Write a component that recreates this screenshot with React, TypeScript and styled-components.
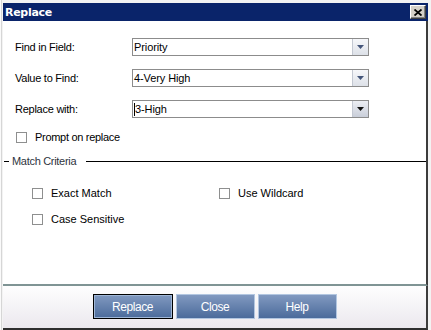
import React from "react";
import styled, { createGlobalStyle } from "styled-components";

const Global = createGlobalStyle`
  html, body { margin: 0; padding: 0; background: #ffffff; }
  body { font-family: "Liberation Sans", Arial, sans-serif; }
  * { box-sizing: border-box; }
`;

const Frame = styled.div`
  width: 431px;
  height: 330px;
  padding: 3px 3px 0 3px;
  background: #f3f3f3;
  box-shadow: inset 1px 0 0 #fafafa, inset 2px 0 0 #d6d6d6;
  display: flex;
  flex-direction: column;
`;

const TitleBar = styled.div`
  height: 18px;
  flex: none;
  background: #0a246a;
  display: flex;
  align-items: center;
  justify-content: space-between;
  padding: 0 2px 0 2px;
`;

const Title = styled.span`
  color: #ffffff;
  font-family: "DejaVu Sans", Verdana, sans-serif;
  font-weight: bold;
  font-size: 11px;
  letter-spacing: -0.3px;
`;

const CloseButton = styled.div`
  width: 16px;
  height: 14px;
  background: #d4d0c8;
  border: 1px solid;
  border-color: #ffffff #404040 #404040 #ffffff;
  box-shadow: inset -1px -1px 0 #808080;
  display: flex;
  align-items: center;
  justify-content: center;
`;

const Body = styled.div`
  flex: 1;
  background: #ffffff;
  border-right: 2px solid #3c3c3c;
  border-bottom: 2px solid #7f9494;
  display: flex;
  flex-direction: column;
`;

const Form = styled.div`
  display: grid;
  grid-template-columns: 117px 237px;
  row-gap: 13px;
  padding: 17px 0 0 12px;
  align-items: center;
`;

const Label = styled.span`
  font-size: 11px;
  letter-spacing: -0.25px;
  color: #000;
`;

const SelectBox = styled.div`
  height: 18px;
  border: 1px solid #8c8c8c;
  background: #fff;
  display: flex;
  align-items: stretch;
`;

const SelectText = styled.div`
  flex: 1;
  display: flex;
  align-items: center;
  padding-left: 1px;
  font-size: 11px;
  letter-spacing: -0.1px;
  color: #000;
`;

const Caret = styled.span`
  display: inline-block;
  width: 1px;
  height: 13px;
  background: #000;
`;

const DropButton = styled.div<{ $active?: boolean }>`
  width: 16px;
  flex: none;
  border-left: 1px solid #c3c8d2;
  background: ${(p) =>
    p.$active
      ? "linear-gradient(#eceef3, #c9ced9)"
      : "linear-gradient(#f6f7fa, #dde1e8)"};
  display: flex;
  align-items: center;
  justify-content: center;
`;

const CheckRow = styled.div`
  display: flex;
  align-items: center;
  height: 11px;
  gap: 8px;
`;

const PromptRow = styled(CheckRow)`
  margin: 14px 0 0 13px;
`;

const CheckBox = styled.span`
  width: 11px;
  height: 11px;
  flex: none;
  border: 1px solid #8e8f8f;
  background: #fff;
`;

const CheckLabel = styled.span<{ $ls?: number }>`
  font-size: 11px;
  letter-spacing: ${(p) => p.$ls ?? 0}px;
  color: #000;
  line-height: 11px;
`;

const GroupHeader = styled.div`
  display: flex;
  align-items: center;
  height: 14px;
  margin-top: 11px;
  padding-left: 1px;
`;

const Dash = styled.span`
  width: 5px;
  height: 1px;
  background: #000;
  flex: none;
  margin-right: 3px;
`;

const GroupTitle = styled.span`
  font-size: 11px;
  letter-spacing: -0.3px;
  color: #2e3440;
`;

const GroupLine = styled.span`
  flex: 1;
  height: 1px;
  background: #000;
  margin-left: 10px;
`;

const Criteria = styled.div`
  display: grid;
  grid-template-columns: 187px 180px;
  row-gap: 15px;
  margin-top: 20px;
  padding-left: 29px;
`;

const Footer = styled.div`
  height: 44px;
  flex: none;
  background: linear-gradient(#fefefe, #ebe8ee);
  border-right: 2px solid #3c3c3c;
  border-bottom: 2px solid #2e2e2e;
  display: flex;
  justify-content: center;
  align-items: flex-start;
  gap: 3px;
  padding-top: 8px;
`;

const Button = styled.button<{ $w: number; $focused?: boolean }>`
  width: ${(p) => p.$w}px;
  height: 25px;
  padding: 0;
  border: 1px solid ${(p) => (p.$focused ? "#000000" : "#b2c6e0")};
  box-shadow: ${(p) => (p.$focused ? "inset 0 0 0 1px #9fb6d6" : "none")};
  background: linear-gradient(#8199c0, #4b6b9b);
  color: #ffffff;
  font-family: "Liberation Sans", Arial, sans-serif;
  font-size: 12px;
  letter-spacing: -0.4px;
`;

const Arrow = ({ dark }: { dark?: boolean }) => (
  <svg width="7" height="4" viewBox="0 0 7 4">
    <polygon points="0,0 7,0 3.5,4" fill={dark ? "#111111" : "#44557a"} />
  </svg>
);

const Select = ({ value, active, caret }: { value: string; active?: boolean; caret?: boolean }) => (
  <SelectBox>
    <SelectText>
      {caret && <Caret />}
      {value}
    </SelectText>
    <DropButton $active={active}>
      <Arrow dark={active} />
    </DropButton>
  </SelectBox>
);

const Check = ({ label }: { label: string }) => (
  <CheckRow>
    <CheckBox />
    <CheckLabel>{label}</CheckLabel>
  </CheckRow>
);

export default function App() {
  return (
    <>
      <Global />
      <Frame>
        <TitleBar>
          <Title>Replace</Title>
          <CloseButton>
            <svg width="8" height="7" viewBox="0 0 8 7">
              <path d="M0.5 0.5 L7.5 6.5 M7.5 0.5 L0.5 6.5" stroke="#000" strokeWidth="1.8" />
            </svg>
          </CloseButton>
        </TitleBar>
        <Body>
          <Form>
            <Label>Find in Field:</Label>
            <Select value="Priority" />
            <Label>Value to Find:</Label>
            <Select value="4-Very High" />
            <Label>Replace with:</Label>
            <Select value="3-High" active caret />
          </Form>
          <PromptRow>
            <CheckBox />
            <CheckLabel $ls={-0.3}>Prompt on replace</CheckLabel>
          </PromptRow>
          <GroupHeader>
            <Dash />
            <GroupTitle>Match Criteria</GroupTitle>
            <GroupLine />
          </GroupHeader>
          <Criteria>
            <Check label="Exact Match" />
            <Check label="Use Wildcard" />
            <Check label="Case Sensitive" />
          </Criteria>
        </Body>
        <Footer>
          <Button $w={80} $focused>Replace</Button>
          <Button $w={79}>Close</Button>
          <Button $w={79}>Help</Button>
        </Footer>
      </Frame>
    </>
  );
}
